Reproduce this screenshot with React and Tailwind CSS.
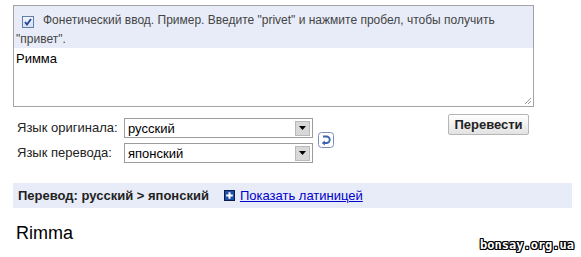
import React from 'react';

const Select = ({ value }) => (
  <div className="w-[189px] h-[20px] border border-[#9c9c9c] bg-white flex items-center justify-between">
    <span className="pl-[3px] text-[13px] text-black leading-none">{value}</span>
    <span className="w-[15px] h-[15px] mr-[2px] bg-[#d8d8d8] border border-[#b9b9b9] flex items-center justify-center">
      <svg width="7" height="4" viewBox="0 0 7 4">
        <path d="M0 0 H7 L3.5 4 Z" fill="#000" />
      </svg>
    </span>
  </div>
);

const SwapIcon = () => (
  <svg width="16" height="16" viewBox="0 0 16 16">
    <rect x="0.5" y="0.5" width="15" height="15" rx="3" fill="#fff" stroke="#7c8fb8" />
    <path d="M5 4.5 H8.5 A3.2 3.2 0 0 1 8.5 11 H5.5" fill="none" stroke="#3a63b0" strokeWidth="1.8" />
    <path d="M3.8 11 L6.8 8.6 L6.8 13.4 Z" fill="#3a63b0" />
  </svg>
);

const PlusIcon = () => (
  <svg width="11" height="11" viewBox="0 0 11 11">
    <rect x="0.5" y="0.5" width="10" height="10" fill="#1f4fa8" stroke="#0b1d4a" />
    <path d="M5.5 2.2 V8.8 M2.2 5.5 H8.8" stroke="#fff" strokeWidth="2" />
  </svg>
);

export default function App() {
  return (
    <div className="relative w-[581px] h-[257px] overflow-hidden bg-white font-['Liberation_Sans',Arial,sans-serif] pt-[5px] pl-[13px]">
      <div className="relative w-[521px] h-[102px] border border-[#a3a3a3] flex flex-col">
        <div className="h-[42px] bg-[#e8ecf8] pl-[2px] pt-[5px] text-[12px] leading-[19px] text-[#444]">
          <span className="inline-flex items-center justify-center align-[-2px] ml-[6px] mr-[9px] w-[12px] h-[12px] border border-[#5f7fa8] bg-gradient-to-b from-[#f0f4fb] to-[#d6e0ef]">
            <svg width="8" height="8" viewBox="0 0 8 8">
              <path d="M1 4 L3 6.5 L7 1" fill="none" stroke="#21449a" strokeWidth="1.8" />
            </svg>
          </span>
          Фонетический ввод. Пример. Введите "privet" и нажмите пробел, чтобы получить "привет".
        </div>
        <div className="pl-[2px] pt-[3px] text-[13px] leading-[16px] text-black">Римма</div>
        <svg className="absolute right-[1px] bottom-[1px]" width="9" height="9" viewBox="0 0 9 9">
          <path d="M8 2 L2 8 M8 5 L5 8" stroke="#9a9a9a" strokeWidth="1" />
        </svg>
      </div>

      <div className="w-[516px] mt-[7px] pl-[4px] flex items-start">
        <div className="flex items-center pt-[4px]">
          <div className="flex flex-col gap-[5px]">
            <div className="flex items-center">
              <span className="w-[107px] text-[13px] text-[#222]">Язык оригинала:</span>
              <Select value="русский" />
            </div>
            <div className="flex items-center">
              <span className="w-[107px] text-[13px] text-[#222]">Язык перевода:</span>
              <Select value="японский" />
            </div>
          </div>
          <div className="ml-[5px] mt-[-2px]">
            <SwapIcon />
          </div>
        </div>
        <button className="ml-auto w-[81px] h-[21px] border border-[#b5b5b5] rounded-[2px] bg-gradient-to-b from-[#ffffff] to-[#e2e2e2] text-[13px] font-bold text-[#222] leading-none">
          Перевести
        </button>
      </div>

      <div className="w-[559px] h-[25px] mt-[20px] bg-[#e8ecf8] flex items-center pl-[5px]">
        <span className="text-[13px] font-bold text-[#222]">Перевод: русский &gt; японский</span>
        <span className="ml-[15px] mr-[5px] flex items-center">
          <PlusIcon />
        </span>
        <a href="#" className="text-[13px] text-[#0000cc] underline">Показать латиницей</a>
      </div>

      <div className="pl-[3px] mt-[15px] text-[18px] leading-[21px] text-black">Rimma</div>

      <div className="absolute right-[7px] bottom-[6px] text-[12px] font-bold leading-none text-white font-['DejaVu_Sans_Mono',monospace] [text-shadow:1px_0_0_#000,-1px_0_0_#000,0_1px_0_#000,0_-1px_0_#000,1px_1px_0_#000,-1px_-1px_0_#000,1px_-1px_0_#000,-1px_1px_0_#000]">
        bonsay.org.ua
      </div>
    </div>
  );
}
